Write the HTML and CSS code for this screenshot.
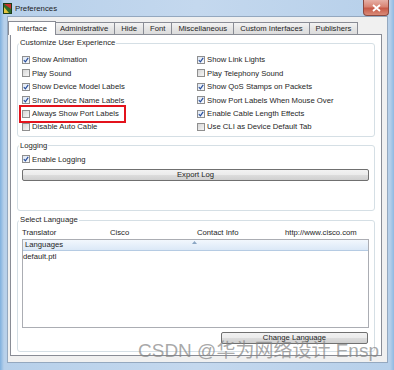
FILE: index.html
```html
<!DOCTYPE html>
<html lang="en">
  <head>
    <meta charset="UTF-8" />
    <title>Preferences</title>
    <link rel="stylesheet" href="styles.css">
  </head>
  <body>
    <div class="window">
      <!-- Title bar -->
      <div class="titlebar">
        <svg class="app-icon" width="9" height="11" viewBox="0 0 9 11">
          <rect x="0.5" y="0.5" width="8" height="10" fill="#2f6b2a" stroke="#1c3d18" />
          <path d="M1 1 L8 1 L8 6 Z" fill="#c8312a" />
          <path d="M1 10 L1 4 L6 10 Z" fill="#e3c540" />
        </svg>
        <span class="title">Preferences</span>
        <button class="close-btn">
          <svg width="9" height="8" viewBox="0 0 9 8">
            <path d="M1 1 L8 7 M8 1 L1 7" stroke="#fff" stroke-width="1.8" />
          </svg>
        </button>
      </div>

      <div class="client">
        <div class="tabs">
          <div class="tab active">Interface</div>
          <div class="tab">Administrative</div>
          <div class="tab">Hide</div>
          <div class="tab">Font</div>
          <div class="tab">Miscellaneous</div>
          <div class="tab">Custom Interfaces</div>
          <div class="tab">Publishers</div>
        </div>

        <div class="tab-pane">
          <fieldset class="group experience">
            <legend>Customize User Experience</legend>
            <div class="option-grid">
              <label class="check on"><span class="box"></span>Show Animation</label>
              <label class="check on"><span class="box"></span>Show Link Lights</label>
              <label class="check"><span class="box"></span>Play Sound</label>
              <label class="check"><span class="box"></span>Play Telephony Sound</label>
              <label class="check on"><span class="box"></span>Show Device Model Labels</label>
              <label class="check on"><span class="box"></span>Show QoS Stamps on Packets</label>
              <label class="check on"><span class="box"></span>Show Device Name Labels</label>
              <label class="check on"><span class="box"></span>Show Port Labels When Mouse Over</label>
              <div class="cell"><label class="check highlight"><span class="box"></span>Always Show Port Labels</label></div>
              <label class="check on"><span class="box"></span>Enable Cable Length Effects</label>
              <label class="check"><span class="box"></span>Disable Auto Cable</label>
              <label class="check"><span class="box"></span>Use CLI as Device Default Tab</label>
            </div>
          </fieldset>

          <fieldset class="group logging">
            <legend>Logging</legend>
            <label class="check on"><span class="box"></span>Enable Logging</label>
            <button class="win-btn export-btn">Export Log</button>
          </fieldset>

          <fieldset class="group language">
            <legend>Select Language</legend>
            <div class="lang-header">
              <span>Translator</span>
              <span>Cisco</span>
              <span>Contact Info</span>
              <span>http://www.cisco.com</span>
            </div>
            <div class="lang-list">
              <div class="list-head">
                <span>Languages</span>
                <svg class="sort-arrow" width="5" height="3" viewBox="0 0 5 3">
                  <path d="M0 3 L2.5 0 L5 3 Z" fill="#8aa6c4" />
                </svg>
              </div>
              <div class="list-row">default.ptl</div>
            </div>
            <button class="win-btn change-btn">Change Language</button>
          </fieldset>
        </div>
      </div>

      <div class="watermark">CSDN @华为网络设计 Ensp</div>
    </div>
  </body>
</html>
```

FILE: styles.css
```css
/* Preferences dialog, Windows 7 look */
body {
  margin: 0;
  padding: 0;
  font-family: "Liberation Sans", Arial, sans-serif;
  font-size: 7.7px;
  color: #1e1e1e;
}

.window {
  position: relative;
  width: 394px;
  height: 370px;
  box-sizing: border-box;
  padding: 0 6px 7px 7px;
  display: flex;
  flex-direction: column;
  background: linear-gradient(90deg, #7fb0de 0, #b7d0ea 4px, #c4d8ee 50%, #b7d0ea calc(100% - 4px), #8fb9e2 100%);
}

.titlebar {
  height: 17px;
  display: flex;
  align-items: center;
  margin-left: -4px;
}

.app-icon {
  margin-right: 3px;
}

.title {
  font-size: 7.8px;
  color: #1b1b1b;
}

.close-btn {
  margin-left: auto;
  margin-right: -1px;
  align-self: flex-start;
  width: 26px;
  height: 16px;
  padding: 0;
  border: 1px solid #8a4a42;
  border-top: none;
  border-radius: 0 0 4px 4px;
  background: linear-gradient(#e6b0a6, #d88474 45%, #c75a48 55%, #d98a78);
  display: flex;
  align-items: center;
  justify-content: center;
}

.client {
  flex: 1;
  display: flex;
  flex-direction: column;
  background: #f0f0f0;
  border: 1px solid #94a8bf;
  padding: 4px 5px 6px 0;
}

/* Tabs */
.tabs {
  display: flex;
  align-items: flex-end;
  height: 13px;
  padding-left: 3px;
}

.tab {
  height: 11px;
  line-height: 11px;
  padding: 0 6px;
  margin-left: -1px;
  border: 1px solid #898c95;
  border-bottom: none;
  background: linear-gradient(#f3f3f3, #e5e5e5 50%, #dcdcdc);
  white-space: nowrap;
}

.tab.active {
  position: relative;
  z-index: 1;
  height: 13px;
  line-height: 13px;
  padding: 0 8px;
  margin: 0 -2px -1px -3px;
  background: #ffffff;
}

.tab-pane {
  flex: 1;
  margin-left: 2px;
  border: 1px solid #898c95;
  background: #ffffff;
  padding: 3px 6px 3px 6px;
  display: flex;
  flex-direction: column;
}

/* Group boxes */
.group {
  margin: 0;
  border: 1px solid #d5dfe5;
  border-radius: 3px;
  padding: 0 5px 0 4px;
  min-width: 0;
}

.group legend {
  line-height: 10px;
  padding: 0 1px;
  margin-left: -3px;
}

.experience {
  padding-top: 5px;
  padding-bottom: 2px;
}

.option-grid {
  display: grid;
  grid-template-columns: 175px 1fr;
  grid-auto-rows: 13.4px;
}

.logging {
  margin-top: 4px;
  padding-top: 2px;
  padding-bottom: 29px;
}

.language {
  margin-top: 4px;
  padding-top: 2px;
  padding-bottom: 7px;
}

/* Checkboxes */
.check {
  display: flex;
  align-items: center;
  gap: 2px;
  height: 13.4px;
  white-space: nowrap;
}

.box {
  width: 8px;
  height: 8px;
  box-sizing: border-box;
  border: 1px solid #8f8f8f;
  background: linear-gradient(135deg, #d6d6d6, #f6f6f6);
  flex-shrink: 0;
}

.check.on .box {
  background: url("data:image/svg+xml,%3Csvg xmlns='http://www.w3.org/2000/svg' width='6' height='6' viewBox='0 0 6 6'%3E%3Cpath d='M0.8 3.2 L2.4 4.8 L5.2 0.9' fill='none' stroke='%23274d9c' stroke-width='1.2'/%3E%3C/svg%3E") center no-repeat, linear-gradient(135deg, #dfe8f5, #f7f9fc);
}

.cell {
  display: flex;
  align-items: center;
}

.check.highlight {
  height: 12px;
  padding: 1px 5px 1px 1px;
  margin-left: -1px;
  outline: 2px solid #e3131c;
}

/* Buttons */
.win-btn {
  display: block;
  height: 12px;
  padding: 0;
  font-family: inherit;
  font-size: 7.7px;
  line-height: 10px;
  color: #1e1e1e;
  border: 1px solid #707070;
  border-radius: 2px;
  background: linear-gradient(#f2f2f2, #ebebeb 50%, #dddddd 50%, #cfcfcf);
}

.export-btn {
  width: 100%;
  margin-top: 3px;
}

.change-btn {
  width: 147px;
  margin: 4px 1px 0 auto;
}

/* Language list */
.lang-header {
  display: grid;
  grid-template-columns: 88px 87px 88px auto;
  height: 11px;
  line-height: 11px;
}

.lang-list {
  margin-top: 1px;
  height: 89px;
  box-sizing: border-box;
  border: 1px solid #abadb3;
  background: #ffffff;
}

.list-head {
  position: relative;
  height: 10px;
  line-height: 10px;
  padding-left: 2px;
  border-bottom: 1px solid #b5cbe3;
  background: linear-gradient(#f2f7fd, #dbe8f7);
}

.sort-arrow {
  position: absolute;
  left: 169px;
  top: 1px;
}

.list-row {
  height: 12px;
  line-height: 12px;
}

/* CSDN watermark over the dialog */
.watermark {
  position: absolute;
  left: 138px;
  top: 340px;
  font-family: "Liberation Sans", "Noto Sans CJK SC", sans-serif;
  font-size: 19px;
  line-height: 22px;
  color: rgba(130, 130, 130, 0.7);
  white-space: nowrap;
}
```
